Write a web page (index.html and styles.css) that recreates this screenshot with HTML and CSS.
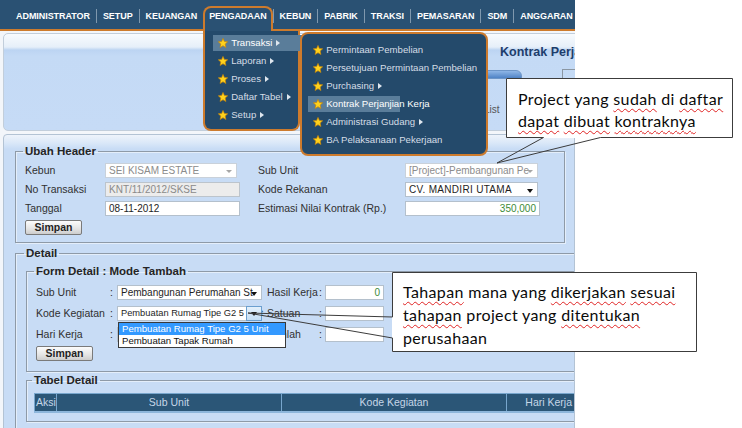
FILE: index.html
```html
<!DOCTYPE html>
<html>
<head>
<meta charset="utf-8">
<title>Kontrak Perjanjian Kerja</title>
<link rel="stylesheet" href="styles.css">
</head>
<body>
<div class="screen">
  <div class="app">
    <nav class="topbar">
      <ul class="menu">
        <li class="mi">ADMINISTRATOR</li>
        <li class="mi">SETUP</li>
        <li class="mi">KEUANGAN</li>
        <li class="mi active">PENGADAAN
          <div class="dd dd1">
            <div class="dd-item hl"><svg class="star" viewBox="0 0 10 10"><polygon points="5,0.4 6.4,3.5 9.7,3.8 7.2,6 7.9,9.5 5,7.7 2.1,9.5 2.8,6 0.3,3.8 3.6,3.5"/></svg>Transaksi<i class="sub"></i></div>
            <div class="dd-item"><svg class="star" viewBox="0 0 10 10"><polygon points="5,0.4 6.4,3.5 9.7,3.8 7.2,6 7.9,9.5 5,7.7 2.1,9.5 2.8,6 0.3,3.8 3.6,3.5"/></svg>Laporan<i class="sub"></i></div>
            <div class="dd-item"><svg class="star" viewBox="0 0 10 10"><polygon points="5,0.4 6.4,3.5 9.7,3.8 7.2,6 7.9,9.5 5,7.7 2.1,9.5 2.8,6 0.3,3.8 3.6,3.5"/></svg>Proses<i class="sub"></i></div>
            <div class="dd-item"><svg class="star" viewBox="0 0 10 10"><polygon points="5,0.4 6.4,3.5 9.7,3.8 7.2,6 7.9,9.5 5,7.7 2.1,9.5 2.8,6 0.3,3.8 3.6,3.5"/></svg>Daftar Tabel<i class="sub"></i></div>
            <div class="dd-item"><svg class="star" viewBox="0 0 10 10"><polygon points="5,0.4 6.4,3.5 9.7,3.8 7.2,6 7.9,9.5 5,7.7 2.1,9.5 2.8,6 0.3,3.8 3.6,3.5"/></svg>Setup<i class="sub"></i></div>
            <div class="dd dd2">
              <div class="dd-item"><svg class="star" viewBox="0 0 10 10"><polygon points="5,0.4 6.4,3.5 9.7,3.8 7.2,6 7.9,9.5 5,7.7 2.1,9.5 2.8,6 0.3,3.8 3.6,3.5"/></svg>Permintaan Pembelian</div>
              <div class="dd-item"><svg class="star" viewBox="0 0 10 10"><polygon points="5,0.4 6.4,3.5 9.7,3.8 7.2,6 7.9,9.5 5,7.7 2.1,9.5 2.8,6 0.3,3.8 3.6,3.5"/></svg>Persetujuan Permintaan Pembelian</div>
              <div class="dd-item"><svg class="star" viewBox="0 0 10 10"><polygon points="5,0.4 6.4,3.5 9.7,3.8 7.2,6 7.9,9.5 5,7.7 2.1,9.5 2.8,6 0.3,3.8 3.6,3.5"/></svg>Purchasing<i class="sub"></i></div>
              <div class="dd-item hl"><svg class="star" viewBox="0 0 10 10"><polygon points="5,0.4 6.4,3.5 9.7,3.8 7.2,6 7.9,9.5 5,7.7 2.1,9.5 2.8,6 0.3,3.8 3.6,3.5"/></svg>Kontrak Perjanjian Kerja</div>
              <div class="dd-item"><svg class="star" viewBox="0 0 10 10"><polygon points="5,0.4 6.4,3.5 9.7,3.8 7.2,6 7.9,9.5 5,7.7 2.1,9.5 2.8,6 0.3,3.8 3.6,3.5"/></svg>Administrasi Gudang<i class="sub"></i></div>
              <div class="dd-item"><svg class="star" viewBox="0 0 10 10"><polygon points="5,0.4 6.4,3.5 9.7,3.8 7.2,6 7.9,9.5 5,7.7 2.1,9.5 2.8,6 0.3,3.8 3.6,3.5"/></svg>BA Pelaksanaan Pekerjaan</div>
            </div>
          </div>
        </li>
        <li class="mi">KEBUN</li>
        <li class="mi">PABRIK</li>
        <li class="mi">TRAKSI</li>
        <li class="mi">PEMASARAN</li>
        <li class="mi">SDM</li>
        <li class="mi">ANGGARAN</li>
      </ul>
    </nav>

    <div class="workspace">
      <section class="toolbar-panel">
        <div class="tb-head">Kontrak Perjanjian Kerja</div>
        <div class="tb-tabs"><span class="tb-tab"></span><span class="tb-box"></span></div>
        <div class="tb-list">List</div>
      </section>

      <section class="main-panel">
        <fieldset class="fs fs-header">
          <legend>Ubah Header</legend>
          <div class="hgrid">
            <span class="lbl">Kebun</span>
            <div class="ctl sel dis w132">SEI KISAM ESTATE</div>
            <span class="lbl">Sub Unit</span>
            <div class="ctl sel dis w133">[Project]-Pembangunan Pe</div>

            <span class="lbl">No Transaksi</span>
            <div class="ctl ro w135">KNT/11/2012/SKSE</div>
            <span class="lbl">Kode Rekanan</span>
            <div class="ctl sel w133 caps">CV. MANDIRI UTAMA</div>

            <span class="lbl">Tanggal</span>
            <div class="ctl w135">08-11-2012</div>
            <span class="lbl">Estimasi Nilai Kontrak (Rp.)</span>
            <div class="ctl num w135">350,000</div>
          </div>
          <button class="btn">Simpan</button>
        </fieldset>

        <fieldset class="fs fs-detail">
          <legend>Detail</legend>
          <fieldset class="fs fs-form">
            <legend>Form Detail : Mode Tambah</legend>
            <div class="fgrid">
              <span class="lbl">Sub Unit</span><span class="colon">:</span>
              <div class="ctl sel w145">Pembangunan Perumahan St</div>
              <span class="lbl">Hasil Kerja</span><span class="colon">:</span>
              <div class="ctl num w59">0</div>

              <span class="lbl">Kode Kegiatan</span><span class="colon">:</span>
              <div class="ctl w145 combo">Pembuatan Rumag Tipe G2 5 Unit<span class="combo-btn"></span>
                <div class="ddlist">
                  <div class="opt hl">Pembuatan Rumag Tipe G2 5 Unit</div>
                  <div class="opt">Pembuatan Tapak Rumah</div>
                </div>
              </div>
              <span class="lbl">Satuan</span><span class="colon">:</span>
              <div class="ctl w59"></div>

              <span class="lbl">Hari Kerja</span><span class="colon">:</span>
              <div class="ctl w145"></div>
              <span class="lbl">Jumlah</span><span class="colon">:</span>
              <div class="ctl w59"></div>
            </div>
            <button class="btn">Simpan</button>
          </fieldset>

          <fieldset class="fs fs-table">
            <legend>Tabel Detail</legend>
            <table class="tbl">
              <thead>
                <tr>
                  <th class="c-aksi">Aksi</th>
                  <th class="c-sub">Sub Unit</th>
                  <th class="c-kode">Kode Kegiatan</th>
                  <th class="c-hari">Hari Kerja</th>
                </tr>
              </thead>
            </table>
          </fieldset>
        </fieldset>
      </section>
    </div>
  </div>

  <div class="callout c1">
    <p>Project yang <span class="sp">sudah</span> di <span class="sp">daftar</span></p>
    <p><span class="sp">dapat</span> <span class="sp">dibuat</span> <span class="sp">kontraknya</span></p>
  </div>
  <div class="callout c2">
    <p><span class="sp">Tahapan</span> mana yang <span class="sp">dikerjakan</span> <span class="sp">sesuai</span></p>
    <p><span class="sp">tahapan</span> project yang <span class="sp">ditentukan</span></p>
    <p>perusahaan</p>
  </div>
  <svg class="callout-lines" width="742" height="428" viewBox="0 0 742 428">
    <path d="M543.5,137.5 L497,163 L600.5,137.5 H732.5 V78.5 H506.5 V137.5 Z"/>
    <path d="M392.5,317 L248,313 L392.5,338 V351.5 H696.5 V272.5 H392.5 Z"/>
  </svg>
</div>
</body>
</html>
```

FILE: styles.css
```css
* { box-sizing: border-box; margin: 0; padding: 0; }
html, body { width: 742px; height: 428px; overflow: hidden; background: #fff; }
body {
  font-family: "Liberation Sans", Arial, sans-serif;
  font-size: 10.5px;
  color: #2e2e2e;
}
.screen { position: relative; width: 742px; height: 428px; }
.app {
  position: relative;
  width: 575px;
  height: 428px;
  overflow: hidden;
  background: #f3f6fa;
}

/* top menu bar */
.topbar {
  height: 31px;
  background: #2a5173;
  border-bottom: 2px solid #cd7b2d;
  position: relative;
  z-index: 10;
}
.menu {
  list-style: none;
  display: flex;
  align-items: center;
  height: 29px;
  padding: 3px 0 0 10px;
}
.mi {
  color: #fff;
  font-weight: bold;
  font-size: 9px;
  letter-spacing: -0.06px;
  line-height: 14px;
  padding: 0 6px;
  border-left: 1px solid #7f98ae;
  white-space: nowrap;
}
.mi:first-child { border-left: 0; }
.mi.active {
  position: relative;
  align-self: flex-end;
  height: 25px;
  margin-bottom: -2px;
  padding: 1px 4px 0;
  background: #2a5173;
  border: 2px solid #cd7b2d;
  border-bottom: 0;
  border-radius: 8px 8px 0 0;
}

/* dropdown menus */
.dd {
  position: absolute;
  background: #244a6b;
  border: 2px solid #cd7b2d;
  font-weight: normal;
  font-size: 9.6px;
  letter-spacing: 0;
  color: #d5dde6;
  white-space: nowrap;
}
.dd1 {
  top: 100%;
  left: -2px;
  width: 97px;
  height: 100px;
  border-top: 0;
  border-radius: 0 0 8px 8px;
  padding: 4px 0 0 8px;
}
.dd2 {
  left: 95px;
  top: 1px;
  width: 188px;
  height: 124px;
  border-radius: 8px;
  padding: 8px 5px 0 6px;
}
.dd-item {
  display: flex;
  align-items: center;
  height: 16px;
  margin-bottom: 2px;
  padding-left: 5px;
}
.dd1 .dd-item { width: 92px; }
.dd-item.hl { background: #5a7d9a; color: #fff; }
.star {
  width: 10px;
  height: 10px;
  margin-right: 3px;
  flex: none;
}
.star polygon { fill: #ffd21c; stroke: #c7860a; stroke-width: 0.7; }
.sub {
  display: inline-block;
  margin-left: 4px;
  width: 0;
  height: 0;
  border-top: 3.5px solid transparent;
  border-bottom: 3.5px solid transparent;
  border-left: 4px solid #dfe7ef;
}

/* workspace */
.workspace { padding: 2px 0 0 3px; }
.toolbar-panel {
  width: 620px;
  height: 98px;
  border: 1px solid #c2cedb;
  border-radius: 5px;
  background: linear-gradient(#f8fbfe, #e6eff9 13px, #bcd4f2 16px, #c4daf5 22px, #c6dbf6);
}
.tb-head {
  padding: 11px 0 0 496px;
  font-weight: bold;
  font-size: 12.5px;
  line-height: 15px;
  color: #1d3d6c;
  white-space: nowrap;
}
.tb-tabs {
  display: flex;
  align-items: flex-end;
  margin-top: 7px;
  height: 12px;
  padding-left: 470px;
}
.tb-tab {
  width: 48px;
  height: 9px;
  border-radius: 0 6px 0 0;
  background: linear-gradient(#8fb6e6, #4f83c6);
  border: 1px solid #6d95c7;
}
.tb-box {
  margin-left: 40px;
  width: 30px;
  height: 10px;
  border-top: 1px solid #8b97a3;
  border-left: 1px solid #8b97a3;
}
.tb-list {
  margin-top: 25px;
  padding-left: 480px;
  font-size: 10px;
  color: #555;
}

.main-panel {
  margin-top: 3px;
  width: 572px;
  height: 300px;
  border: 1px solid #b3c3d4;
  border-radius: 4px 4px 0 0;
  background: linear-gradient(#eef4fb, #dae8f8 8px, #c8dcf5 14px);
  padding: 9px 0 0 11px;
  overflow: hidden;
}

/* fieldsets */
.fs {
  border: 1px solid #8e9aa7;
  min-width: 0;
  box-shadow: inset 1px 1px 0 #e4eefa, 1px 1px 0 #e4eefa;
}
.fs legend {
  font-weight: bold;
  font-size: 11.5px;
  line-height: 14px;
  color: #252525;
  padding: 0 2px;
  margin-left: -2px;
}
.fs-header { width: 550px; padding: 5px 9px 7px 9px; }
.fs-detail { width: 640px; margin-top: 3px; padding: 4px 10px 20px 10px; }
.fs-form { padding: 7px 8px 10px 9px; }
.fs-table { margin-top: 1px; padding: 6px 7px 8px 7px; }

.lbl { line-height: 15px; white-space: nowrap; color: #303030; }
.colon { line-height: 15px; }

.hgrid {
  display: grid;
  grid-template-columns: 80px 153px 147px 135px;
  grid-auto-rows: 15px;
  row-gap: 4px;
  align-items: center;
}
.fgrid {
  display: grid;
  grid-template-columns: 74px 7px 150px 52px 6px 59px;
  grid-auto-rows: 15px;
  row-gap: 6px;
  align-items: center;
}

/* controls */
.ctl {
  position: relative;
  height: 15px;
  border: 1px solid #b4c0cc;
  background: #fff;
  font-size: 10px;
  line-height: 13px;
  padding: 0 3px;
  white-space: nowrap;
  overflow: hidden;
  color: #1e1e1e;
}
.caps { letter-spacing: 0.3px; }
.w132 { width: 132px; }
.w133 { width: 133px; }
.w135 { width: 135px; }
.w145 { width: 145px; }
.w59 { width: 59px; }
.sel { padding-right: 14px; }
.sel::after {
  content: "";
  position: absolute;
  right: 4px;
  top: 6px;
  border-left: 3px solid transparent;
  border-right: 3px solid transparent;
  border-top: 4px solid #111;
}
.sel.dis { color: #8c8c8c; border-color: #c9d1da; }
.sel.dis::after { border-top-color: #a6a6a6; border-top-width: 3px; }
.ro { background: #ececec; color: #8a8a8a; border-color: #bcc4cc; }
.num { text-align: right; color: #3d8b37; }
.combo { overflow: visible; font-size: 9.3px; }
.combo-btn {
  position: absolute;
  right: -1px;
  top: -1px;
  width: 16px;
  height: 15px;
  background: linear-gradient(#e3f0fb, #c4def5);
  border: 1px solid #6b9fcf;
}
.combo-btn::after {
  content: "";
  position: absolute;
  left: 4px;
  top: 5px;
  border-left: 3px solid transparent;
  border-right: 3px solid transparent;
  border-top: 4px solid #111;
}
.ddlist {
  position: absolute;
  left: 0;
  top: 15px;
  width: 168px;
  border: 1px solid #3a3a3a;
  background: #fff;
  z-index: 5;
}
.opt { height: 12px; line-height: 12px; padding-left: 3px; color: #111; white-space: nowrap; font-size: 9.6px; }
.opt.hl { background: #3399ff; color: #fff; }

.btn {
  display: block;
  width: 57px;
  height: 15px;
  margin-top: 4px;
  border: 1px solid #7a7a7a;
  border-radius: 2px;
  background: linear-gradient(#fcfcfc, #e4e4e4 60%, #cdcdcd);
  font-family: "Liberation Sans", Arial, sans-serif;
  font-weight: bold;
  font-size: 10.5px;
  line-height: 13px;
  color: #1f1f1f;
  text-align: center;
}

/* table */
.tbl {
  border-collapse: collapse;
  table-layout: fixed;
  width: 542px;
  background: #2b5677;
  color: #c6d7e8;
  font-size: 10.5px;
}
.tbl th {
  height: 18px;
  font-weight: normal;
  border: 1px solid #78a6cd;
  border-bottom: 2px solid #8db6db;
  padding: 0 2px;
  white-space: nowrap;
  overflow: hidden;
}
.tbl th.c-aksi { width: 22px; text-align: left; padding: 0 0 0 1px; }
.c-sub { width: 225px; text-align: center; }
.c-kode { width: 225px; text-align: center; }
.tbl th.c-hari { width: 70px; text-align: right; padding-right: 4px; }

/* annotations */
.callout {
  position: absolute;
  background: #fff;
  font-family: Lato, "Open Sans", sans-serif;
  font-size: 16px;
  letter-spacing: 0.35px;
  color: #0a0a0a;
  white-space: nowrap;
}
.c1 { left: 506px; top: 78px; width: 227px; height: 60px; padding: 10px 0 0 12px; line-height: 22px; }
.c2 { left: 392px; top: 272px; width: 305px; height: 80px; padding: 8px 0 0 11px; line-height: 23px; }
.sp {
  text-decoration: underline wavy #e02424;
  text-decoration-thickness: 1px;
  text-underline-offset: 3px;
}
.callout-lines {
  position: absolute;
  left: 0;
  top: 0;
  pointer-events: none;
}
.callout-lines path { fill: none; stroke: #3c3c3c; stroke-width: 1; }
```
